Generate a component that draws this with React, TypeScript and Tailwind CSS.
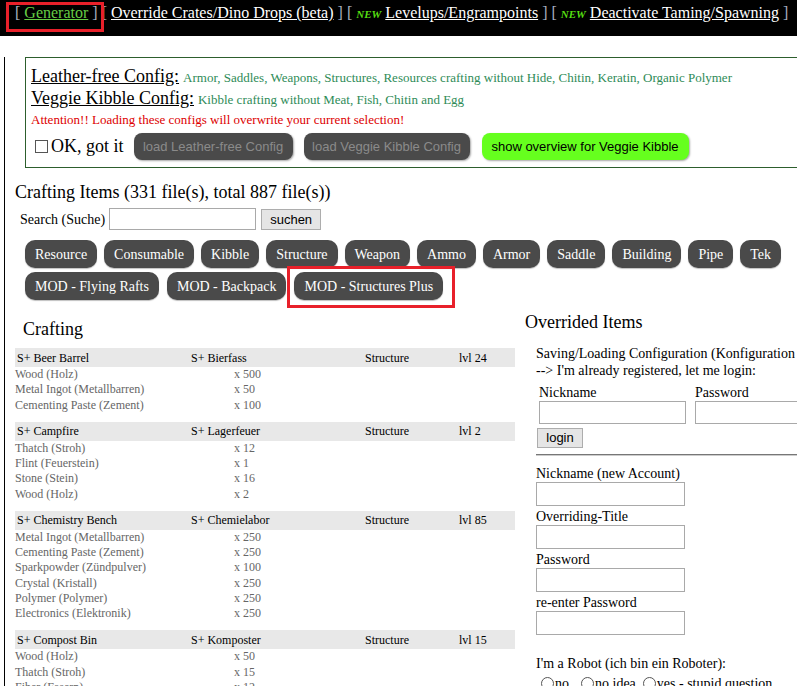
import React from 'react'

const categoriesTop = ['Resource', 'Consumable', 'Kibble', 'Structure', 'Weapon', 'Ammo', 'Armor', 'Saddle', 'Building', 'Pipe', 'Tek']

const items = [
  {
    name: 'S+ Beer Barrel',
    german: 'S+ Bierfass',
    category: 'Structure',
    level: 'lvl 24',
    parts: [
      ['Wood (Holz)', 'x 500'],
      ['Metal Ingot (Metallbarren)', 'x 50'],
      ['Cementing Paste (Zement)', 'x 100'],
    ],
  },
  {
    name: 'S+ Campfire',
    german: 'S+ Lagerfeuer',
    category: 'Structure',
    level: 'lvl 2',
    parts: [
      ['Thatch (Stroh)', 'x 12'],
      ['Flint (Feuerstein)', 'x 1'],
      ['Stone (Stein)', 'x 16'],
      ['Wood (Holz)', 'x 2'],
    ],
  },
  {
    name: 'S+ Chemistry Bench',
    german: 'S+ Chemielabor',
    category: 'Structure',
    level: 'lvl 85',
    parts: [
      ['Metal Ingot (Metallbarren)', 'x 250'],
      ['Cementing Paste (Zement)', 'x 250'],
      ['Sparkpowder (Zündpulver)', 'x 100'],
      ['Crystal (Kristall)', 'x 250'],
      ['Polymer (Polymer)', 'x 250'],
      ['Electronics (Elektronik)', 'x 250'],
    ],
  },
  {
    name: 'S+ Compost Bin',
    german: 'S+ Komposter',
    category: 'Structure',
    level: 'lvl 15',
    parts: [
      ['Wood (Holz)', 'x 50'],
      ['Thatch (Stroh)', 'x 15'],
      ['Fiber (Fasern)', 'x 12'],
      ['Stone (Stein)', 'x 35'],
    ],
  },
]

function Bracket({ children }: { children: React.ReactNode }) {
  return <span className="text-[#a8b0c0]">{children}</span>
}

function NewTag() {
  return <span className="text-[11px] font-bold italic text-[#55dd11]">NEW</span>
}

function CategoryButton({ label }: { label: string }) {
  return (
    <span className="flex h-[28px] items-center rounded-[10px] bg-[#4a4a4a] px-[10px] text-[14px] text-white shadow-[0_1px_1px_rgba(0,0,0,0.25)]">
      {label}
    </span>
  )
}

function FormGroup({ label }: { label: string }) {
  return (
    <div className="mb-[2px]">
      <div className="h-[17px] leading-[17px]">{label}</div>
      <input type="text" className="h-[24px] w-[149px] border border-[#a9a9a9] bg-white" />
    </div>
  )
}

function Radio({ label, className }: { label: string; className?: string }) {
  return (
    <span className={`flex items-center ${className ?? ''}`}>
      <span className="mr-[1px] inline-block h-[13px] w-[13px] rounded-full border border-[#555]" />
      {label}
    </span>
  )
}

export default function App() {
  return (
    <div className="relative h-[686px] w-full overflow-hidden bg-white font-['Liberation_Serif','Times_New_Roman',serif] text-black">
      <div className="relative h-[36px] whitespace-nowrap bg-black pl-[15px] pt-[3px] text-[16px] leading-[19px] text-white">
        <Bracket>[ </Bracket>
        <a className="text-[#66cc44] underline">Generator</a>
        <Bracket> ]</Bracket> <Bracket>[ </Bracket>
        <a className="underline">Override Crates/Dino Drops (beta)</a>
        <Bracket> ]</Bracket> <Bracket>[ </Bracket>
        <NewTag /> <a className="underline">Levelups/Engrampoints</a>
        <Bracket> ]</Bracket> <Bracket>[ </Bracket>
        <NewTag /> <a className="underline">Deactivate Taming/Spawning</a>
        <Bracket> ]</Bracket>
        <span className="absolute left-[6px] top-[2px] h-[30px] w-[98px] border-[3px] border-[#e8202a]" />
      </div>

      <div className="ml-[4px] h-[700px] border-l border-black">
        <div className="ml-[20px] mt-[21px] w-[800px] border border-[#2d5e2d] px-[5px] pb-[7px] pt-[7px]">
          <div className="h-[22px] whitespace-nowrap leading-[22px]">
            <span className="text-[18px] underline">Leather-free Config:</span>{' '}
            <span className="text-[13px] text-[#2e8b57]">
              Armor, Saddles, Weapons, Structures, Resources crafting without Hide, Chitin, Keratin, Organic Polymer
            </span>
          </div>
          <div className="h-[22px] whitespace-nowrap leading-[22px]">
            <span className="text-[18px] underline">Veggie Kibble Config:</span>{' '}
            <span className="text-[13px] text-[#2e8b57]">Kibble crafting without Meat, Fish, Chitin and Egg</span>
          </div>
          <div className="h-[22px] whitespace-nowrap text-[13px] leading-[22px] text-[#dd0000]">
            Attention!! Loading these configs will overwrite your current selection!
          </div>
          <div className="mt-[2px] flex h-[27px] items-center whitespace-nowrap">
            <span className="ml-[4px] inline-block h-[13px] w-[13px] border border-[#555]" />
            <span className="ml-[3px] text-[18px]">OK, got it</span>
            <button
              type="button"
              disabled
              className="ml-[10px] h-[27px] w-[159px] rounded-[8px] bg-[#4a4a4a] font-['Liberation_Sans',Arial,sans-serif] text-[13px] text-[#8a8a8a] shadow-[1px_1px_2px_rgba(0,0,0,0.35)]"
            >
              load Leather-free Config
            </button>
            <button
              type="button"
              disabled
              className="ml-[11px] h-[27px] w-[166px] rounded-[8px] bg-[#4a4a4a] font-['Liberation_Sans',Arial,sans-serif] text-[13px] text-[#8a8a8a] shadow-[1px_1px_2px_rgba(0,0,0,0.35)]"
            >
              load Veggie Kibble Config
            </button>
            <button
              type="button"
              className="ml-[12px] h-[27px] w-[207px] rounded-[8px] bg-[#66ff1e] font-['Liberation_Sans',Arial,sans-serif] text-[13px] text-black shadow-[1px_1px_2px_rgba(0,0,0,0.35)]"
            >
              show overview for Veggie Kibble
            </button>
          </div>
        </div>

        <h1 className="ml-[10px] mt-[14px] text-[18px] leading-[21px]">Crafting Items (331 file(s), total 887 file(s))</h1>

        <div className="ml-[15px] mt-[5px] flex h-[22px] items-center">
          <span className="text-[14px]">Search (Suche)</span>
          <input type="text" className="ml-[4px] h-[22px] w-[147px] border border-[#a9a9a9] bg-white" />
          <button
            type="button"
            className="ml-[5px] h-[21px] w-[60px] border border-[#adadad] bg-[#e5e5e5] font-['Liberation_Sans',Arial,sans-serif] text-[13px]"
          >
            suchen
          </button>
        </div>

        <div className="ml-[20px] mt-[10px] flex gap-x-[7px] whitespace-nowrap">
          {categoriesTop.map((c) => (
            <CategoryButton key={c} label={c} />
          ))}
        </div>
        <div className="ml-[20px] mt-[4px] flex gap-x-[8px] whitespace-nowrap">
          <CategoryButton label="MOD - Flying Rafts" />
          <CategoryButton label="MOD - Backpack" />
          <span className="relative">
            <CategoryButton label="MOD - Structures Plus" />
            <span className="absolute left-[-7px] top-[-6px] h-[42px] w-[168px] border-[3px] border-[#e8202a]" />
          </span>
        </div>

        <div className="mt-[11px] flex">
          <div className="ml-[10px] w-[500px] shrink-0">
            <h2 className="mb-[8px] pl-[8px] pt-[8px] text-[18px] leading-[21px]">Crafting</h2>
            {items.map((item) => (
              <div key={item.name} className="mb-[9px]">
                <div className="flex h-[19px] items-center bg-[#e8e8e8] text-[12px]">
                  <span className="w-[176px] pl-[2px]">{item.name}</span>
                  <span className="w-[174px]">{item.german}</span>
                  <span className="w-[94px]">{item.category}</span>
                  <span>{item.level}</span>
                </div>
                {item.parts.map(([part, qty]) => (
                  <div key={part} className="flex text-[12px] leading-[15.25px] text-[#666]">
                    <span className="w-[219px]">{part}</span>
                    <span>{qty}</span>
                  </div>
                ))}
              </div>
            ))}
          </div>

          <div className="flex-1 whitespace-nowrap pl-[10px]">
            <h2 className="pt-[1px] text-[18px] leading-[21px]">Overrided Items</h2>
            <div className="ml-[11px] mt-[12px] text-[14px] leading-[17px]">
              <div>Saving/Loading Configuration (Konfiguration speichern/laden)</div>
              <div>--&gt; I&apos;m already registered, let me login:</div>
              <div className="ml-[3px] mt-[5px] flex gap-x-[9px]">
                <div>
                  <div className="h-[17px]">Nickname</div>
                  <input type="text" className="h-[23px] w-[147px] border border-[#a9a9a9] bg-white" />
                </div>
                <div>
                  <div className="h-[17px]">Password</div>
                  <input type="password" className="h-[23px] w-[147px] border border-[#a9a9a9] bg-white" />
                </div>
              </div>
              <button
                type="button"
                className="ml-[1px] mt-[4px] h-[20px] w-[46px] border border-[#adadad] bg-[#e5e5e5] font-['Liberation_Sans',Arial,sans-serif] text-[13px] leading-[18px]"
              >
                login
              </button>
              <div className="mt-[6px] h-[2px] w-[300px] border-t border-b border-t-[#777] border-b-[#ccc]" />
              <div className="mt-[9px]">
                <FormGroup label="Nickname (new Account)" />
                <FormGroup label="Overriding-Title" />
                <FormGroup label="Password" />
                <FormGroup label="re-enter Password" />
              </div>
              <div className="mt-[20px]">I&apos;m a Robot (ich bin ein Roboter):</div>
              <div className="ml-[5px] mt-[3px] flex">
                <Radio label="no" className="mr-[12px]" />
                <Radio label="no idea" className="mr-[7px]" />
                <Radio label="yes - stupid question" />
              </div>
            </div>
          </div>
        </div>
      </div>
    </div>
  )
}
